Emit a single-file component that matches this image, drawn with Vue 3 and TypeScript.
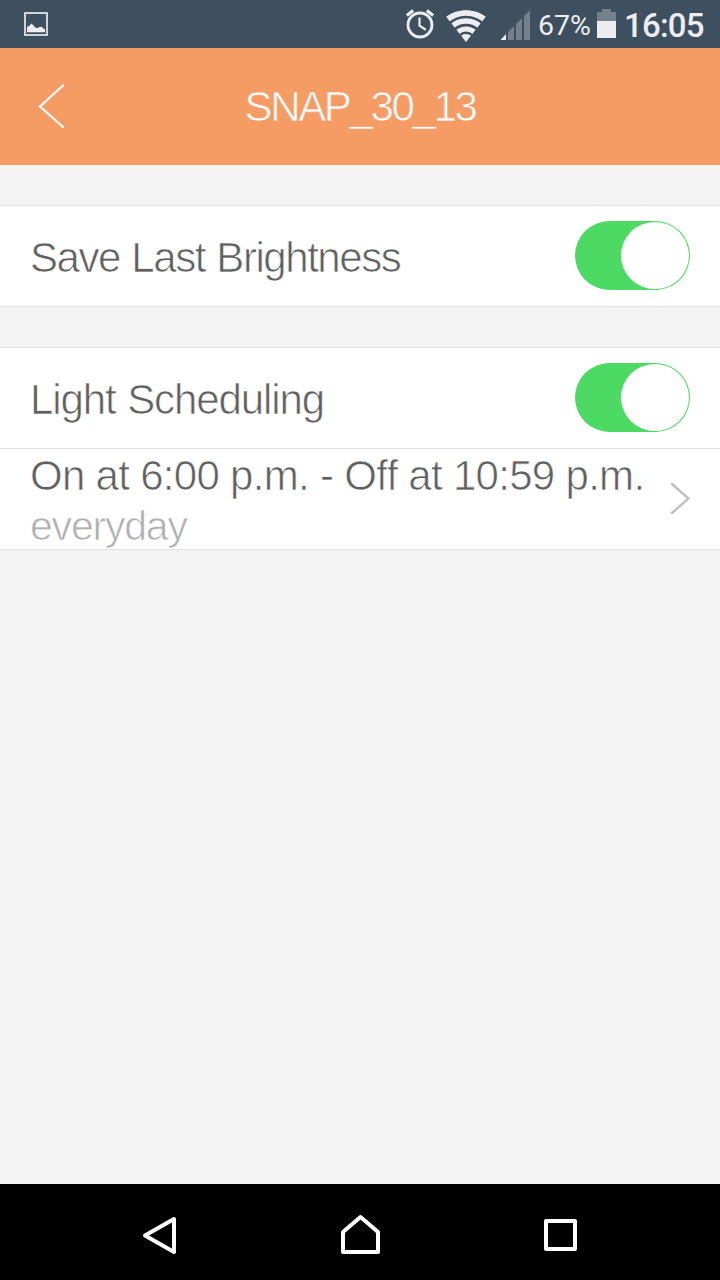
<script setup lang="ts">
import { ref } from 'vue'

const deviceName = 'SNAP_30_13'
const saveBrightness = ref(true)
const scheduling = ref(true)
</script>

<template>
  <div class="screen">
    <div class="status">
      <svg class="status-icons" width="536" height="48" viewBox="0 0 536 48">
        <rect x="25" y="13" width="22" height="22" fill="none" stroke="#dfe2e5" stroke-width="1.800" />
        <path d="M27 32.300V27l2-1 2.500-2.500 2 2 2.400 2.400 2.500-.2 1.500-1 2 .3 1.500 1.500 1.600 .8V32.300z" fill="#ecedef" />
        <g fill="none" stroke="#ecedef">
          <circle cx="420" cy="25" r="12" stroke-width="2.800" />
          <path d="M419.500 17.500v8.200l6.300 4" stroke-width="2.200" />
          <path d="M406.800 15.600l6.400-5M433.200 15.600l-6.400-5" stroke-width="3.200" />
        </g>
        <clipPath id="wifi-fan"><path d="M446 16.500C457 8 475 8 486 16.500L466 42z" /></clipPath>
        <g clip-path="url(#wifi-fan)" fill="none" stroke="#ecedef">
          <circle cx="466" cy="42" r="29.200" stroke-width="6" />
          <circle cx="466" cy="42" r="21" stroke-width="5.400" />
          <circle cx="466" cy="42" r="13" stroke-width="5.200" />
          <circle cx="466" cy="42" r="4" stroke-width="8" />
        </g>
        <path d="M508 32l6-6v14h-6zM516 24l6-6v22h-6zM524 16l6-6v30h-6z" fill="#74818c" />
        <path d="M500.500 40l5.500-6V40z" fill="#ecedef" />
      </svg>
      <span class="percent">67%</span>
      <svg class="battery" width="19" height="29" viewBox="0 0 19 29">
        <path d="M0 3h5V0h9v3h5v9H0z" fill="#74818c" />
        <path d="M0 12h19V29H0z" fill="#ecedef" />
      </svg>
      <span class="clock">16:05</span>
    </div>

    <header class="header">
      <svg class="back" width="30" height="48" viewBox="0 0 30 48">
        <path d="M26 2.500L3 23.500L26 44" fill="none" stroke="#fff" stroke-width="2.200" stroke-linecap="round" />
      </svg>
      <h1 class="title">{{ deviceName }}</h1>
    </header>

    <section class="group">
      <div class="row">
        <span class="label brightness">Save Last Brightness</span>
        <button class="toggle" :class="{ on: saveBrightness }" @click="saveBrightness = !saveBrightness"><i /></button>
      </div>
    </section>

    <section class="group">
      <div class="row">
        <span class="label light">Light Scheduling</span>
        <button class="toggle" :class="{ on: scheduling }" @click="scheduling = !scheduling"><i /></button>
      </div>
      <div class="row schedule">
        <div class="lines">
          <span class="label time">On at 6:00 p.m. - Off at 10:59 p.m.</span>
          <span class="label days">everyday</span>
        </div>
        <svg class="chevron" width="22" height="34" viewBox="0 0 22 34">
          <path d="M4 2L20.500 16.500L4 31" fill="none" stroke="#c0c0c0" stroke-width="2.400" stroke-linecap="round" />
        </svg>
      </div>
    </section>

    <nav class="nav">
      <svg width="720" height="96" viewBox="0 0 720 96" fill="none" stroke="#fff" stroke-width="4" stroke-linejoin="round">
        <path d="M174 35L145 51.500L174 68z" />
        <path d="M343 48L360.500 33L378 48V68H343z" />
        <rect x="546" y="37" width="29" height="28" />
      </svg>
    </nav>
  </div>
</template>

<style>
body {
  margin: 0;
}
</style>

<style scoped>
.screen {
  width: 720px;
  height: 1280px;
  display: flex;
  flex-direction: column;
  overflow: hidden;
  background: #f3f3f3;
  font-family: "Liberation Sans", Arial, sans-serif;
}
.status {
  height: 48px;
  flex: none;
  display: flex;
  background: #3e505f;
  color: #ecedef;
  font-family: Roboto, sans-serif;
  line-height: 51px;
  white-space: nowrap;
}
.status-icons {
  flex: none;
}
.percent {
  width: 61px;
  padding-left: 2px;
  box-sizing: border-box;
  font-size: 28.5px;
}
.battery {
  margin-top: 9px;
}
.clock {
  margin-left: 8px;
  font-size: 33px;
  font-weight: 500;
  letter-spacing: -0.8px;
}
.header {
  height: 117px;
  flex: none;
  display: grid;
  grid-template-columns: 120px 1fr 120px;
  align-items: center;
  background: #f59b64;
}
.back {
  margin-left: 37px;
}
.title {
  margin: 0;
  text-align: center;
  color: #fff;
  font-size: 42px;
  font-weight: 400;
  letter-spacing: -2.35px;
  -webkit-text-stroke: 0.7px #f59b64;
}
.group {
  margin-top: 40px;
  flex: none;
  background: #fff;
  border-top: 1px solid #e2e2e2;
  border-bottom: 1px solid #e2e2e2;
}
.row {
  height: 100px;
  padding: 0 30px;
  display: flex;
  align-items: center;
  justify-content: space-between;
}
.schedule {
  border-top: 1px solid #e2e2e2;
}
.label {
  color: #606060;
  font-size: 42px;
  line-height: 50px;
  padding-top: 3px;
  white-space: nowrap;
  -webkit-text-stroke: 0.7px #fff;
}
.lines {
  width: 620px;
  display: flex;
  flex-direction: column;
}
.lines .label {
  height: 50px;
  padding-top: 0;
  line-height: 54px;
}
.brightness {
  letter-spacing: -1.45px;
  word-spacing: 1.2px;
}
.light {
  letter-spacing: -1.1px;
  word-spacing: 1px;
}
.time {
  letter-spacing: -0.7px;
}
.lines .days {
  color: #b0b0b0;
  font-size: 41px;
  letter-spacing: -1.2px;
}
.toggle {
  width: 115px;
  height: 69px;
  margin: 0 0 1px;
  padding: 0;
  border: 0;
  border-radius: 35px;
  background: #ddd;
}
.toggle i {
  display: block;
  width: 68px;
  height: 67.5px;
  margin-left: 1px;
  border-radius: 50%;
  background: #fff;
}
.toggle.on {
  background: #4cd964;
}
.toggle.on i {
  margin-left: 45.8px;
}
.chevron {
  flex: none;
}
.nav {
  height: 96px;
  margin-top: auto;
  flex: none;
  background: #000;
}
.nav svg {
  display: block;
}
</style>
